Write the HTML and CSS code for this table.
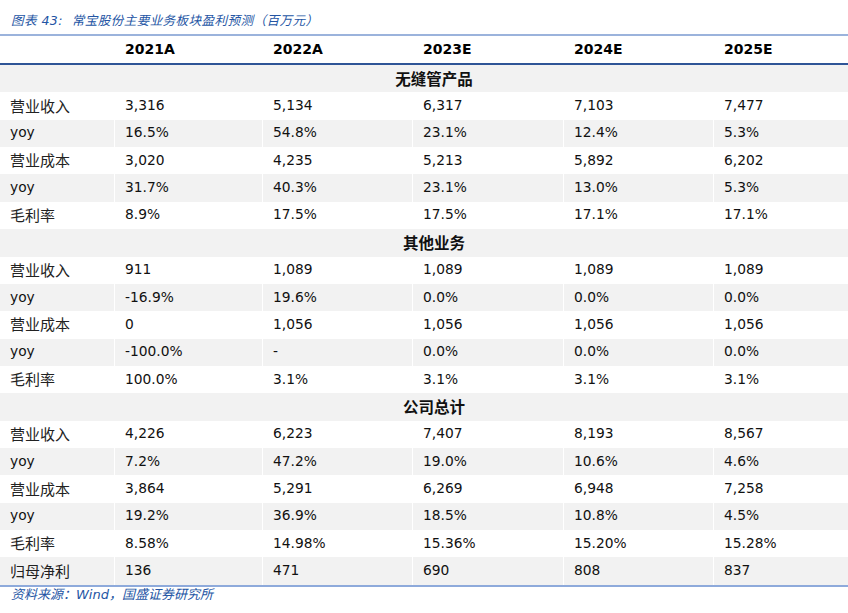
FILE: index.html
```html
<!DOCTYPE html>
<html lang="zh">
<head>
<meta charset="utf-8">
<title>图表43</title>
<link rel="stylesheet" href="styles.css">
</head>
<body>
<div class="page">
  <div class="title">图表 43:&nbsp; 常宝股份主要业务板块盈利预测（百万元）</div>
  <div class="table">
    <div class="row head">
      <div class="c"></div><div class="c">2021A</div><div class="c">2022A</div><div class="c">2023E</div><div class="c">2024E</div><div class="c">2025E</div>
    </div>

    <div class="row sec alt"><div class="s">无缝管产品</div></div>
    <div class="row"><div class="c lab">营业收入</div><div class="c">3,316</div><div class="c">5,134</div><div class="c">6,317</div><div class="c">7,103</div><div class="c">7,477</div></div>
    <div class="row alt"><div class="c">yoy</div><div class="c">16.5%</div><div class="c">54.8%</div><div class="c">23.1%</div><div class="c">12.4%</div><div class="c">5.3%</div></div>
    <div class="row"><div class="c lab">营业成本</div><div class="c">3,020</div><div class="c">4,235</div><div class="c">5,213</div><div class="c">5,892</div><div class="c">6,202</div></div>
    <div class="row alt"><div class="c">yoy</div><div class="c">31.7%</div><div class="c">40.3%</div><div class="c">23.1%</div><div class="c">13.0%</div><div class="c">5.3%</div></div>
    <div class="row"><div class="c lab">毛利率</div><div class="c">8.9%</div><div class="c">17.5%</div><div class="c">17.5%</div><div class="c">17.1%</div><div class="c">17.1%</div></div>

    <div class="row sec alt"><div class="s">其他业务</div></div>
    <div class="row"><div class="c lab">营业收入</div><div class="c">911</div><div class="c">1,089</div><div class="c">1,089</div><div class="c">1,089</div><div class="c">1,089</div></div>
    <div class="row alt"><div class="c">yoy</div><div class="c">-16.9%</div><div class="c">19.6%</div><div class="c">0.0%</div><div class="c">0.0%</div><div class="c">0.0%</div></div>
    <div class="row"><div class="c lab">营业成本</div><div class="c">0</div><div class="c">1,056</div><div class="c">1,056</div><div class="c">1,056</div><div class="c">1,056</div></div>
    <div class="row alt"><div class="c">yoy</div><div class="c">-100.0%</div><div class="c">-</div><div class="c">0.0%</div><div class="c">0.0%</div><div class="c">0.0%</div></div>
    <div class="row"><div class="c lab">毛利率</div><div class="c">100.0%</div><div class="c">3.1%</div><div class="c">3.1%</div><div class="c">3.1%</div><div class="c">3.1%</div></div>

    <div class="row sec alt"><div class="s">公司总计</div></div>
    <div class="row"><div class="c lab">营业收入</div><div class="c">4,226</div><div class="c">6,223</div><div class="c">7,407</div><div class="c">8,193</div><div class="c">8,567</div></div>
    <div class="row alt"><div class="c">yoy</div><div class="c">7.2%</div><div class="c">47.2%</div><div class="c">19.0%</div><div class="c">10.6%</div><div class="c">4.6%</div></div>
    <div class="row"><div class="c lab">营业成本</div><div class="c">3,864</div><div class="c">5,291</div><div class="c">6,269</div><div class="c">6,948</div><div class="c">7,258</div></div>
    <div class="row alt"><div class="c">yoy</div><div class="c">19.2%</div><div class="c">36.9%</div><div class="c">18.5%</div><div class="c">10.8%</div><div class="c">4.5%</div></div>
    <div class="row"><div class="c lab">毛利率</div><div class="c">8.58%</div><div class="c">14.98%</div><div class="c">15.36%</div><div class="c">15.20%</div><div class="c">15.28%</div></div>
    <div class="row alt last"><div class="c lab">归母净利</div><div class="c">136</div><div class="c">471</div><div class="c">690</div><div class="c">808</div><div class="c">837</div></div>
  </div>
  <div class="source">资料来源：Wind，国盛证券研究所</div>
</div>
</body>
</html>
```

FILE: styles.css
```css
html, body {
  margin: 0;
  padding: 0;
  background: #ffffff;
}

.page {
  width: 848px;
  font-family: "DejaVu Sans", "Noto Sans CJK SC", sans-serif;
  color: #111111;
}

.title {
  height: 34px;
  box-sizing: border-box;
  padding: 12px 0 0 11px;
  font-size: 12.6px;
  line-height: 18px;
  letter-spacing: 0.4px;
  font-style: italic;
  color: #2455a4;
  white-space: nowrap;
}

.table {
  border-top: 2px solid #9bb3dc;
  border-bottom: 2px solid #8eaadb;
}

.row {
  display: grid;
  grid-template-columns: 114px 147px 149px 150px 149px 1fr;
  column-gap: 1px;
  height: 27.37px;
}

.c {
  display: flex;
  align-items: center;
  padding-left: 10px;
  padding-bottom: 2px;
  font-size: 13.8px;
  white-space: nowrap;
}

.lab {
  font-size: 15px;
  color: #222222;
}

.alt .c,
.alt .s {
  background: #f2f2f2;
}

.head {
  height: 27px;
  border-bottom: 2px solid #2f5597;
}

.head .c {
  font-size: 14px;
  font-weight: 700;
  color: #000000;
}

.sec {
  display: flex;
}

.s {
  flex: 1;
  display: flex;
  align-items: center;
  justify-content: center;
  padding-left: 20px;
  padding-bottom: 2px;
  font-size: 15.5px;
  font-weight: 700;
  color: #111111;
}

.source {
  padding: 0 0 0 11px;
  font-size: 13px;
  line-height: 16px;
  font-style: italic;
  color: #2455a4;
  white-space: nowrap;
}
```
